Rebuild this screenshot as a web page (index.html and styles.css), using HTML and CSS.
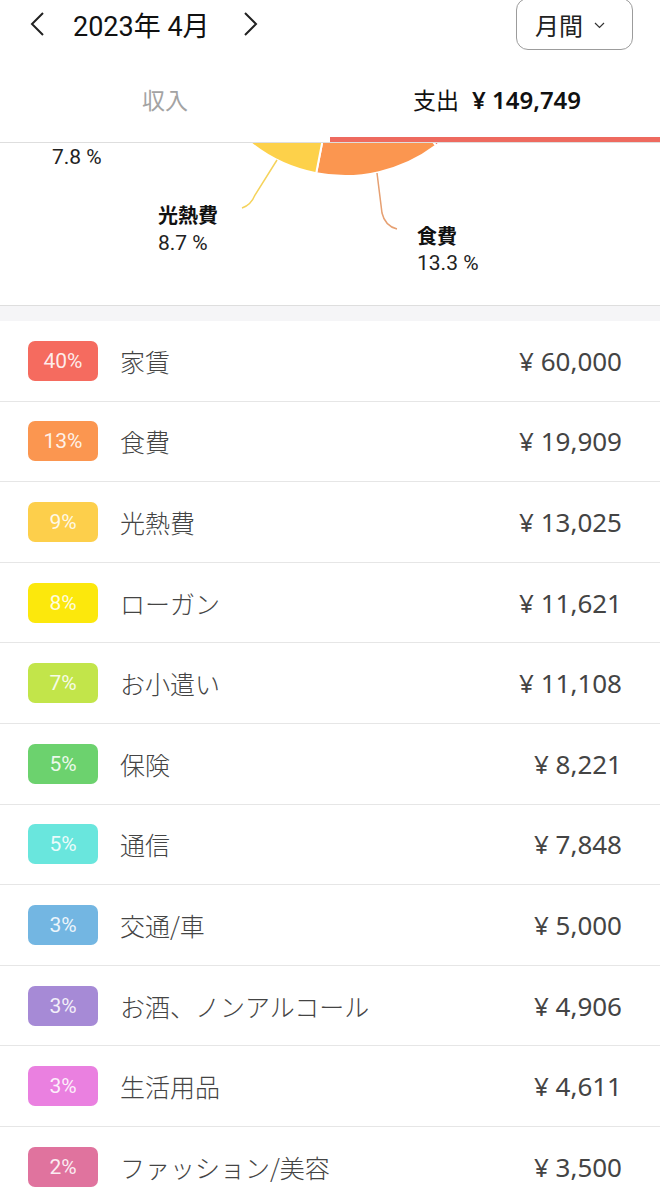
FILE: index.html
```html
<!DOCTYPE html>
<html lang="ja">
<head>
<meta charset="utf-8">
<link rel="stylesheet" href="styles.css">
</head>
<body>
<div class="app">
  <header class="topbar">
    <div class="month-nav">
      <svg class="chev" width="16" height="26" viewBox="0 0 16 26"><polyline points="14,2 3,13 14,24" fill="none" stroke="#222" stroke-width="2"/></svg>
      <span class="month">2023年 4月</span>
      <svg class="chev" width="16" height="26" viewBox="0 0 16 26"><polyline points="2,2 13,13 2,24" fill="none" stroke="#222" stroke-width="2"/></svg>
    </div>
    <button class="period">月間 <svg width="11" height="7" viewBox="0 0 11 7"><polyline points="1,1 5.5,5.5 10,1" fill="none" stroke="#333" stroke-width="1.2"/></svg></button>
  </header>
  <nav class="tabs">
    <div class="tab">収入</div>
    <div class="tab active">支出 <span class="total">¥ 149,749</span></div>
  </nav>
  <section class="chart">
    <svg width="660" height="163" viewBox="0 0 660 163">
      <path d="M345,-118 L435.9,2.6 A151,151 0 0 0 342.4,-269 Z" fill="#f56b5f" stroke="#fff" stroke-width="2"/>
      <path d="M345,-118 L316.2,30.2 A151,151 0 0 0 435.9,2.6 Z" fill="#fb9650" stroke="#fff" stroke-width="2"/>
      <path d="M345,-118 L243.4,-6.3 A151,151 0 0 0 316.2,30.2 Z" fill="#fdd14a" stroke="#fff" stroke-width="2"/>
      <path d="M277,17 L255,52 Q251,62 242,65" fill="none" stroke="#f5d35c" stroke-width="1.5"/>
      <path d="M377,30 L382,70 Q385,83 397,86" fill="none" stroke="#e6a072" stroke-width="1.5"/>
      <text class="pct" x="52" y="21">7.8 %</text>
      <text class="lbl" x="158" y="80">光熱費</text>
      <text class="pct" x="158" y="107">8.7 %</text>
      <text class="lbl" x="417" y="101">食費</text>
      <text class="pct" x="417" y="127">13.3 %</text>
    </svg>
  </section>
  <div class="gap"></div>
  <ul class="list">
    <li class="row"><span class="badge c1">40%</span><span class="name">家賃</span><span class="amt">¥ 60,000</span></li>
    <li class="row"><span class="badge c2">13%</span><span class="name">食費</span><span class="amt">¥ 19,909</span></li>
    <li class="row"><span class="badge c3">9%</span><span class="name">光熱費</span><span class="amt">¥ 13,025</span></li>
    <li class="row"><span class="badge c4">8%</span><span class="name">ローガン</span><span class="amt">¥ 11,621</span></li>
    <li class="row"><span class="badge c5">7%</span><span class="name">お小遣い</span><span class="amt">¥ 11,108</span></li>
    <li class="row"><span class="badge c6">5%</span><span class="name">保険</span><span class="amt">¥ 8,221</span></li>
    <li class="row"><span class="badge c7">5%</span><span class="name">通信</span><span class="amt">¥ 7,848</span></li>
    <li class="row"><span class="badge c8">3%</span><span class="name">交通/車</span><span class="amt">¥ 5,000</span></li>
    <li class="row"><span class="badge c9">3%</span><span class="name">お酒、ノンアルコール</span><span class="amt">¥ 4,906</span></li>
    <li class="row"><span class="badge c10">3%</span><span class="name">生活用品</span><span class="amt">¥ 4,611</span></li>
    <li class="row"><span class="badge c11">2%</span><span class="name">ファッション/美容</span><span class="amt">¥ 3,500</span></li>
  </ul>
</div>
</body>
</html>
```

FILE: styles.css
```css
* { box-sizing: border-box; }
html, body { margin: 0; padding: 0; background: #fff; }
body {
  font-family: Roboto, "Noto Sans CJK JP", sans-serif;
  color: #222;
  overflow: hidden;
}
.app { width: 660px; height: 1200px; overflow: hidden; }

.topbar {
  height: 58px;
  display: flex;
  align-items: flex-start;
  justify-content: space-between;
  padding: 0 27px 0 29px;
}
.month-nav {
  display: flex;
  align-items: center;
  height: 48px;
}
.month-nav .chev { display: block; }
.month {
  font-size: 27px;
  color: #111;
  margin: 0 33px 0 28px;
}
.period {
  margin-top: -2px;
  width: 117px;
  height: 52px;
  border: 1.5px solid #9c9c9c;
  border-radius: 12px;
  background: #fff;
  font-family: "Noto Sans CJK JP", sans-serif;
  font-size: 24px;
  color: #222;
  display: flex;
  align-items: center;
  justify-content: flex-start;
  gap: 11px;
  padding: 0 0 0 18px;
}
.period svg { display: block; margin-top: 2px; }

.tabs {
  display: grid;
  grid-template-columns: 1fr 1fr;
  border-bottom: 1px solid #dedede;
}
.tab {
  height: 84px;
  padding-top: 5px;
  line-height: 72px;
  text-align: center;
  font-family: "Noto Sans CJK JP", sans-serif;
  font-size: 23px;
  color: #a3a3a3;
  border-bottom: 5px solid transparent;
}
.tab.active {
  color: #111;
  border-bottom-color: #ee6a5f;
  padding-left: 4px;
}
.tab .total {
  font-family: "Noto Sans", sans-serif;
  font-weight: 600;
  margin-left: 8px;
  font-size: 24px;
}

.chart { height: 163px; border-bottom: 1px solid #dedede; }
.chart svg { display: block; }
.chart .pct { font-family: Roboto, sans-serif; font-size: 21px; fill: #222; }
.chart .lbl { font-family: "Noto Sans CJK JP", sans-serif; font-size: 20px; font-weight: 700; fill: #111; }

.gap { height: 15px; background: #f5f5f7; }

.list { list-style: none; margin: 0; padding: 0; }
.row {
  height: 80.6px;
  border-bottom: 1px solid #e6e6e6;
  display: flex;
  align-items: center;
  padding: 0 38px 0 28px;
  font-family: "Noto Sans CJK JP", sans-serif;
}
.badge {
  flex: none;
  width: 70px;
  height: 40px;
  border-radius: 7px;
  display: flex;
  align-items: center;
  justify-content: center;
  font-family: Roboto, sans-serif;
  font-size: 21px;
  font-weight: 400;
  color: rgba(255,255,255,0.88);
}
.name {
  flex: 1;
  margin-left: 22px;
  font-size: 25px;
  font-weight: 300;
  color: #444;
}
.amt {
  font-family: "Noto Sans", sans-serif;
  font-size: 26px;
  color: #444;
}
.c1 { background: #f56b5f; }
.c2 { background: #fb9650; }
.c3 { background: #fdcf4b; }
.c4 { background: #fce80c; }
.c5 { background: #c2e54a; }
.c6 { background: #6cd26e; }
.c7 { background: #69e6dd; }
.c8 { background: #73b6e2; }
.c9 { background: #a68ad6; }
.c10 { background: #ea80e0; }
.c11 { background: #e0739e; }
```
